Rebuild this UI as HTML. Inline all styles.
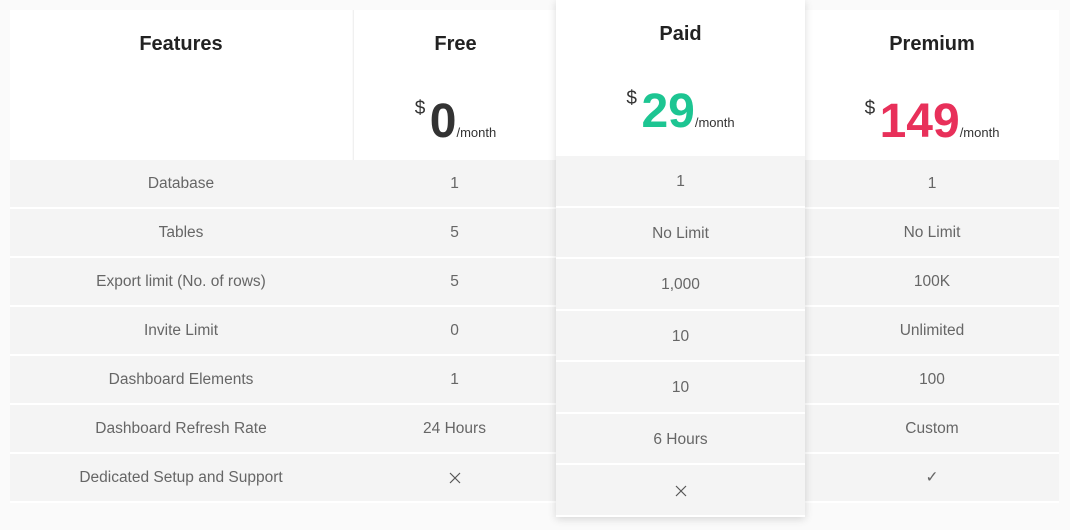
<!DOCTYPE html>
<html><head><style>
body{margin:0;width:1070px;height:530px;background:#fafafa;font-family:"Liberation Sans",sans-serif;position:relative;overflow:hidden}
.a{position:absolute}
.hd{background:#fff;top:10px;height:150px}
.t{position:absolute;width:100%;text-align:center;font-weight:bold;font-size:20px;color:#222}
.row{position:absolute;left:10px;width:1049px;height:47px;background:#f4f4f4;border-bottom:2px solid #fff}
.c{position:absolute;top:0;height:47px;line-height:47px;text-align:center;font-size:15.5px;color:#666}
.pr{position:absolute;width:100%;text-align:center;white-space:nowrap}
.d{font-size:19px;color:#333;vertical-align:top;position:relative;top:4px}
.n{font-size:48px;font-weight:bold}
.m{font-size:13px;color:#333}
#paid{position:absolute;left:556px;top:0;width:249px;height:517px;background:#fff;box-shadow:0 2px 8px rgba(0,0,0,.15)}
.pc{position:absolute;left:0;width:249px;height:49.5px;background:#f4f4f4;border-bottom:2px solid #fff;text-align:center;line-height:52px;font-size:15.5px;color:#666}
.x{display:inline-block;vertical-align:middle}
</style></head><body>
<div class="a hd" style="left:10px;width:342px"><div class="t" style="top:23px">Features</div></div>
<div class="a hd" style="left:353px;width:203px;border-left:1px solid #f0f0f0"><div class="t" style="top:23px">Free</div>
<div class="pr" style="top:84px"><span class="d">$</span> <span class="n" style="color:#333">0</span><span class="m">/month</span></div></div>
<div class="a hd" style="left:805px;width:254px"><div class="t" style="top:23px">Premium</div>
<div class="pr" style="top:84px"><span class="d">$</span> <span class="n" style="color:#e8305a">149</span><span class="m">/month</span></div></div>

<div class="row" style="top:160px"><div class="c" style="left:0;width:342px">Database</div><div class="c" style="left:343px;width:203px">1</div><div class="c" style="left:795px;width:254px">1</div></div>
<div class="row" style="top:209px"><div class="c" style="left:0;width:342px">Tables</div><div class="c" style="left:343px;width:203px">5</div><div class="c" style="left:795px;width:254px">No Limit</div></div>
<div class="row" style="top:258px"><div class="c" style="left:0;width:342px">Export limit (No. of rows)</div><div class="c" style="left:343px;width:203px">5</div><div class="c" style="left:795px;width:254px">100K</div></div>
<div class="row" style="top:307px"><div class="c" style="left:0;width:342px">Invite Limit</div><div class="c" style="left:343px;width:203px">0</div><div class="c" style="left:795px;width:254px">Unlimited</div></div>
<div class="row" style="top:356px"><div class="c" style="left:0;width:342px">Dashboard Elements</div><div class="c" style="left:343px;width:203px">1</div><div class="c" style="left:795px;width:254px">100</div></div>
<div class="row" style="top:405px"><div class="c" style="left:0;width:342px">Dashboard Refresh Rate</div><div class="c" style="left:343px;width:203px">24 Hours</div><div class="c" style="left:795px;width:254px">Custom</div></div>
<div class="row" style="top:454px"><div class="c" style="left:0;width:342px">Dedicated Setup and Support</div><div class="c" style="left:343px;width:203px"><svg class="x" width="12" height="12"><path d="M1 1L11 11M11 1L1 11" stroke="#555" stroke-width="1.2"/></svg></div><div class="c" style="left:795px;width:254px">✓</div></div>

<div id="paid">
<div class="t" style="top:23px">Paid</div>
<div class="pr" style="top:84px"><span class="d">$</span> <span class="n" style="color:#1dc592">29</span><span class="m">/month</span></div>
<div class="pc" style="top:156px">1</div>
<div class="pc" style="top:207.5px">No Limit</div>
<div class="pc" style="top:259px">1,000</div>
<div class="pc" style="top:310.5px">10</div>
<div class="pc" style="top:362px">10</div>
<div class="pc" style="top:413.5px">6 Hours</div>
<div class="pc" style="top:465px"><svg class="x" width="12" height="12"><path d="M1 1L11 11M11 1L1 11" stroke="#555" stroke-width="1.2"/></svg></div>
</div>
</body></html>
